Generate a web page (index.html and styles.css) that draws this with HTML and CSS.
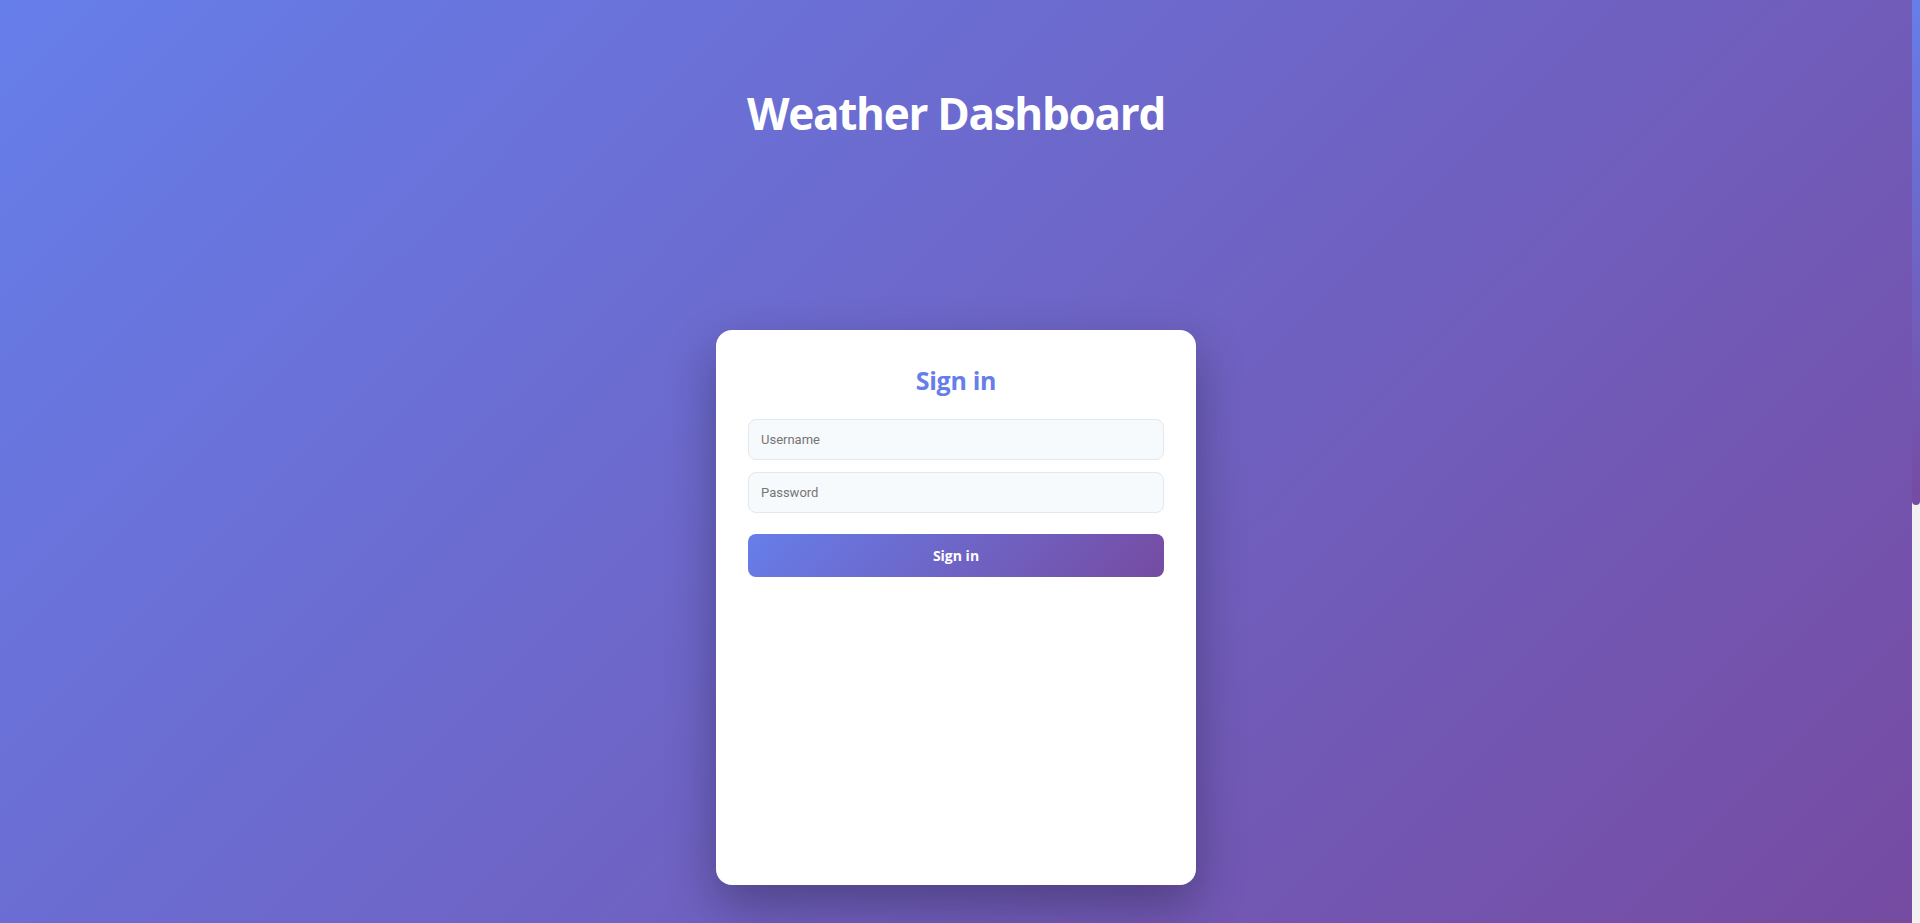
FILE: index.html
```html
<!DOCTYPE html>
<html lang="en">
<head>
<meta charset="utf-8">
<title>Weather Dashboard</title>
<link rel="stylesheet" href="styles.css">
</head>
<body>
<div class="viewport">
  <div class="page">
    <header class="header">
      <h1 class="title">Weather Dashboard</h1>
    </header>
    <main class="main">
      <section class="card">
        <h2 class="card-title">Sign in</h2>
        <form class="form">
          <input class="field" type="text" placeholder="Username">
          <input class="field" type="password" placeholder="Password">
          <button class="btn" type="button">Sign in</button>
        </form>
      </section>
    </main>
  </div>
  <div class="scrollbar">
    <div class="scroll-thumb"></div>
  </div>
</div>
</body>
</html>
```
FILE: styles.css
```css
html,
body {
  height: 100%;
  overflow: hidden;
}
body {
  margin: 0;
  font-family: "Open Sans", "Noto Sans", sans-serif;
  color: #333;
}
.viewport {
  display: flex;
  height: 100%;
}
.page {
  flex: 1;
  display: flex;
  flex-direction: column;
  align-items: center;
  background: linear-gradient(135deg, #667eea 0%, #764ba2 100%);
}
.scrollbar {
  width: 8px;
  background: #f1f1f1;
}
.scroll-thumb {
  height: 505px;
  border-radius: 0 0 4px 4px;
  background: linear-gradient(180deg, #667eea, #764ba2);
}
.header {
  padding-top: 87px;
  text-align: center;
}
.title {
  margin: 0;
  font-size: 44px;
  font-weight: 700;
  letter-spacing: -1.3px;
  color: #fff;
  line-height: 1.2;
}
.main {
  padding-top: 190px;
}
.card {
  width: 480px;
  height: 555px;
  box-sizing: border-box;
  padding: 32px;
  background: #fff;
  border-radius: 16px;
  box-shadow: 0 20px 50px rgba(0, 0, 0, 0.3);
}
.card-title {
  margin: 2px 0 23px;
  text-align: center;
  font-size: 25px;
  font-weight: 700;
  letter-spacing: -0.3px;
  color: #667eea;
  line-height: 1.3;
}
.form {
  display: flex;
  flex-direction: column;
  gap: 12px;
}
.field {
  height: 41px;
  box-sizing: border-box;
  padding: 0 12px;
  border: 1px solid #e2e8f0;
  border-radius: 8px;
  background: #f7fafc;
  font-family: "Roboto", "Liberation Sans", sans-serif;
  font-size: 13px;
  color: #333;
  outline: none;
}
.field::placeholder {
  color: #757575;
}
.btn {
  margin-top: 9px;
  height: 43px;
  border: none;
  border-radius: 8px;
  background: linear-gradient(135deg, #667eea 0%, #764ba2 100%);
  color: #fff;
  font-family: "Open Sans", "Noto Sans", sans-serif;
  font-weight: 700;
  font-size: 14px;
  cursor: pointer;
}
```
